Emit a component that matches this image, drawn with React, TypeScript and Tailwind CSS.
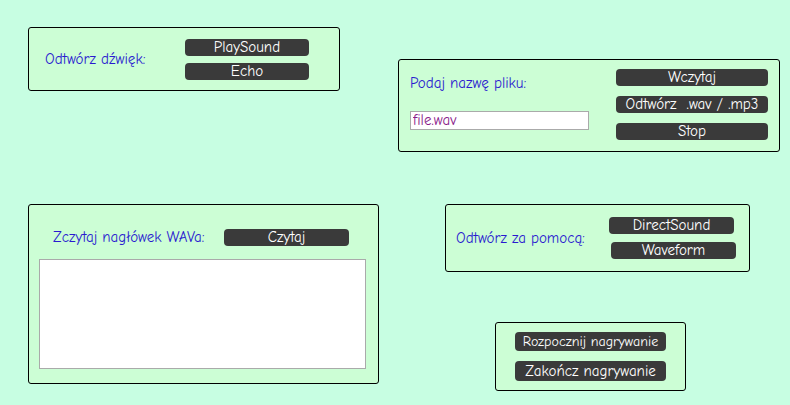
import { useState } from 'react';

const font = { fontFamily: '"Comic Sans MS", "Comic Neue", "Open Sans", sans-serif' };

function Btn({ label, className = '' }: { label: string; className?: string }) {
  return (
    <button
      type="button"
      className={`h-[17px] rounded-[4px] bg-[#3a3a3a] text-white text-[15px] leading-[17px] text-center ${className}`}
    >
      {label}
    </button>
  );
}

function Panel({ className = '', children }: { className?: string; children: React.ReactNode }) {
  return (
    <div className={`rounded-[3px] border border-black bg-[#ccfed5] ${className}`}>{children}</div>
  );
}

export default function App() {
  const [fileName, setFileName] = useState('file.wav');

  return (
    <div className="w-[790px] h-[405px] bg-[#c7fee2] overflow-hidden" style={font}>
      <div className="flex items-start">
        <Panel className="ml-[28px] mt-[27px] w-[312px] h-[64px] flex items-center">
          <span className="ml-[16px] w-[140px] text-[15px] text-[#2a1ad0]">Odtwórz dźwięk:</span>
          <div className="flex flex-col gap-[7px]">
            <Btn label="PlaySound" className="w-[124px]" />
            <Btn label="Echo" className="w-[124px]" />
          </div>
        </Panel>

        <Panel className="ml-[58px] mt-[59px] w-[382px] h-[93px] flex">
          <div className="ml-[11px] flex flex-col">
            <span className="mt-[14px] text-[15px] text-[#2a1ad0] leading-[18px]">Podaj nazwę pliku:</span>
            <input
              value={fileName}
              onChange={(e) => setFileName(e.target.value)}
              className="mt-[19px] w-[179px] h-[19px] bg-white border border-[#aaaaaa] px-[2px] text-[15px] text-[#8a1a8a] outline-none"
              style={font}
            />
          </div>
          <div className="ml-[27px] mt-[9px] flex flex-col gap-[10px]">
            <Btn label="Wczytaj" className="w-[152px]" />
            <Btn label="Odtwórz  .wav / .mp3" className="w-[152px] whitespace-pre" />
            <Btn label="Stop" className="w-[152px]" />
          </div>
        </Panel>
      </div>

      <div className="mt-[52px] flex items-start">
        <Panel className="ml-[28px] w-[351px] h-[180px] flex flex-col">
          <div className="mt-[21px] flex items-center">
            <span className="ml-[24px] w-[171px] text-[15px] text-[#2a1ad0]">Zczytaj nagłówek WAVa:</span>
            <Btn label="Czytaj" className="w-[125px]" />
          </div>
          <textarea
            readOnly
            className="mt-[10px] ml-[10px] w-[327px] h-[110px] bg-white border border-[#aaaaaa] resize-none outline-none"
          />
        </Panel>

        <div className="ml-[66px] flex flex-col">
          <Panel className="w-[305px] h-[68px] flex items-center">
            <span className="ml-[10px] w-[153px] text-[15px] text-[#2a1ad0]">Odtwórz za pomocą:</span>
            <div className="flex flex-col gap-[8px]">
              <Btn label="DirectSound" className="w-[125px]" />
              <Btn label="Waveform" className="w-[125px] ml-[2px]" />
            </div>
          </Panel>
          <Panel className="ml-[50px] mt-[50px] w-[191px] h-[69px] flex flex-col items-center justify-center gap-[10px]">
            <Btn label="Rozpocznij nagrywanie" className="w-[151px] h-[19px] leading-[19px] !text-[14px]" />
            <Btn label="Zakończ nagrywanie" className="w-[151px] h-[20px] leading-[20px]" />
          </Panel>
        </div>
      </div>
    </div>
  );
}
